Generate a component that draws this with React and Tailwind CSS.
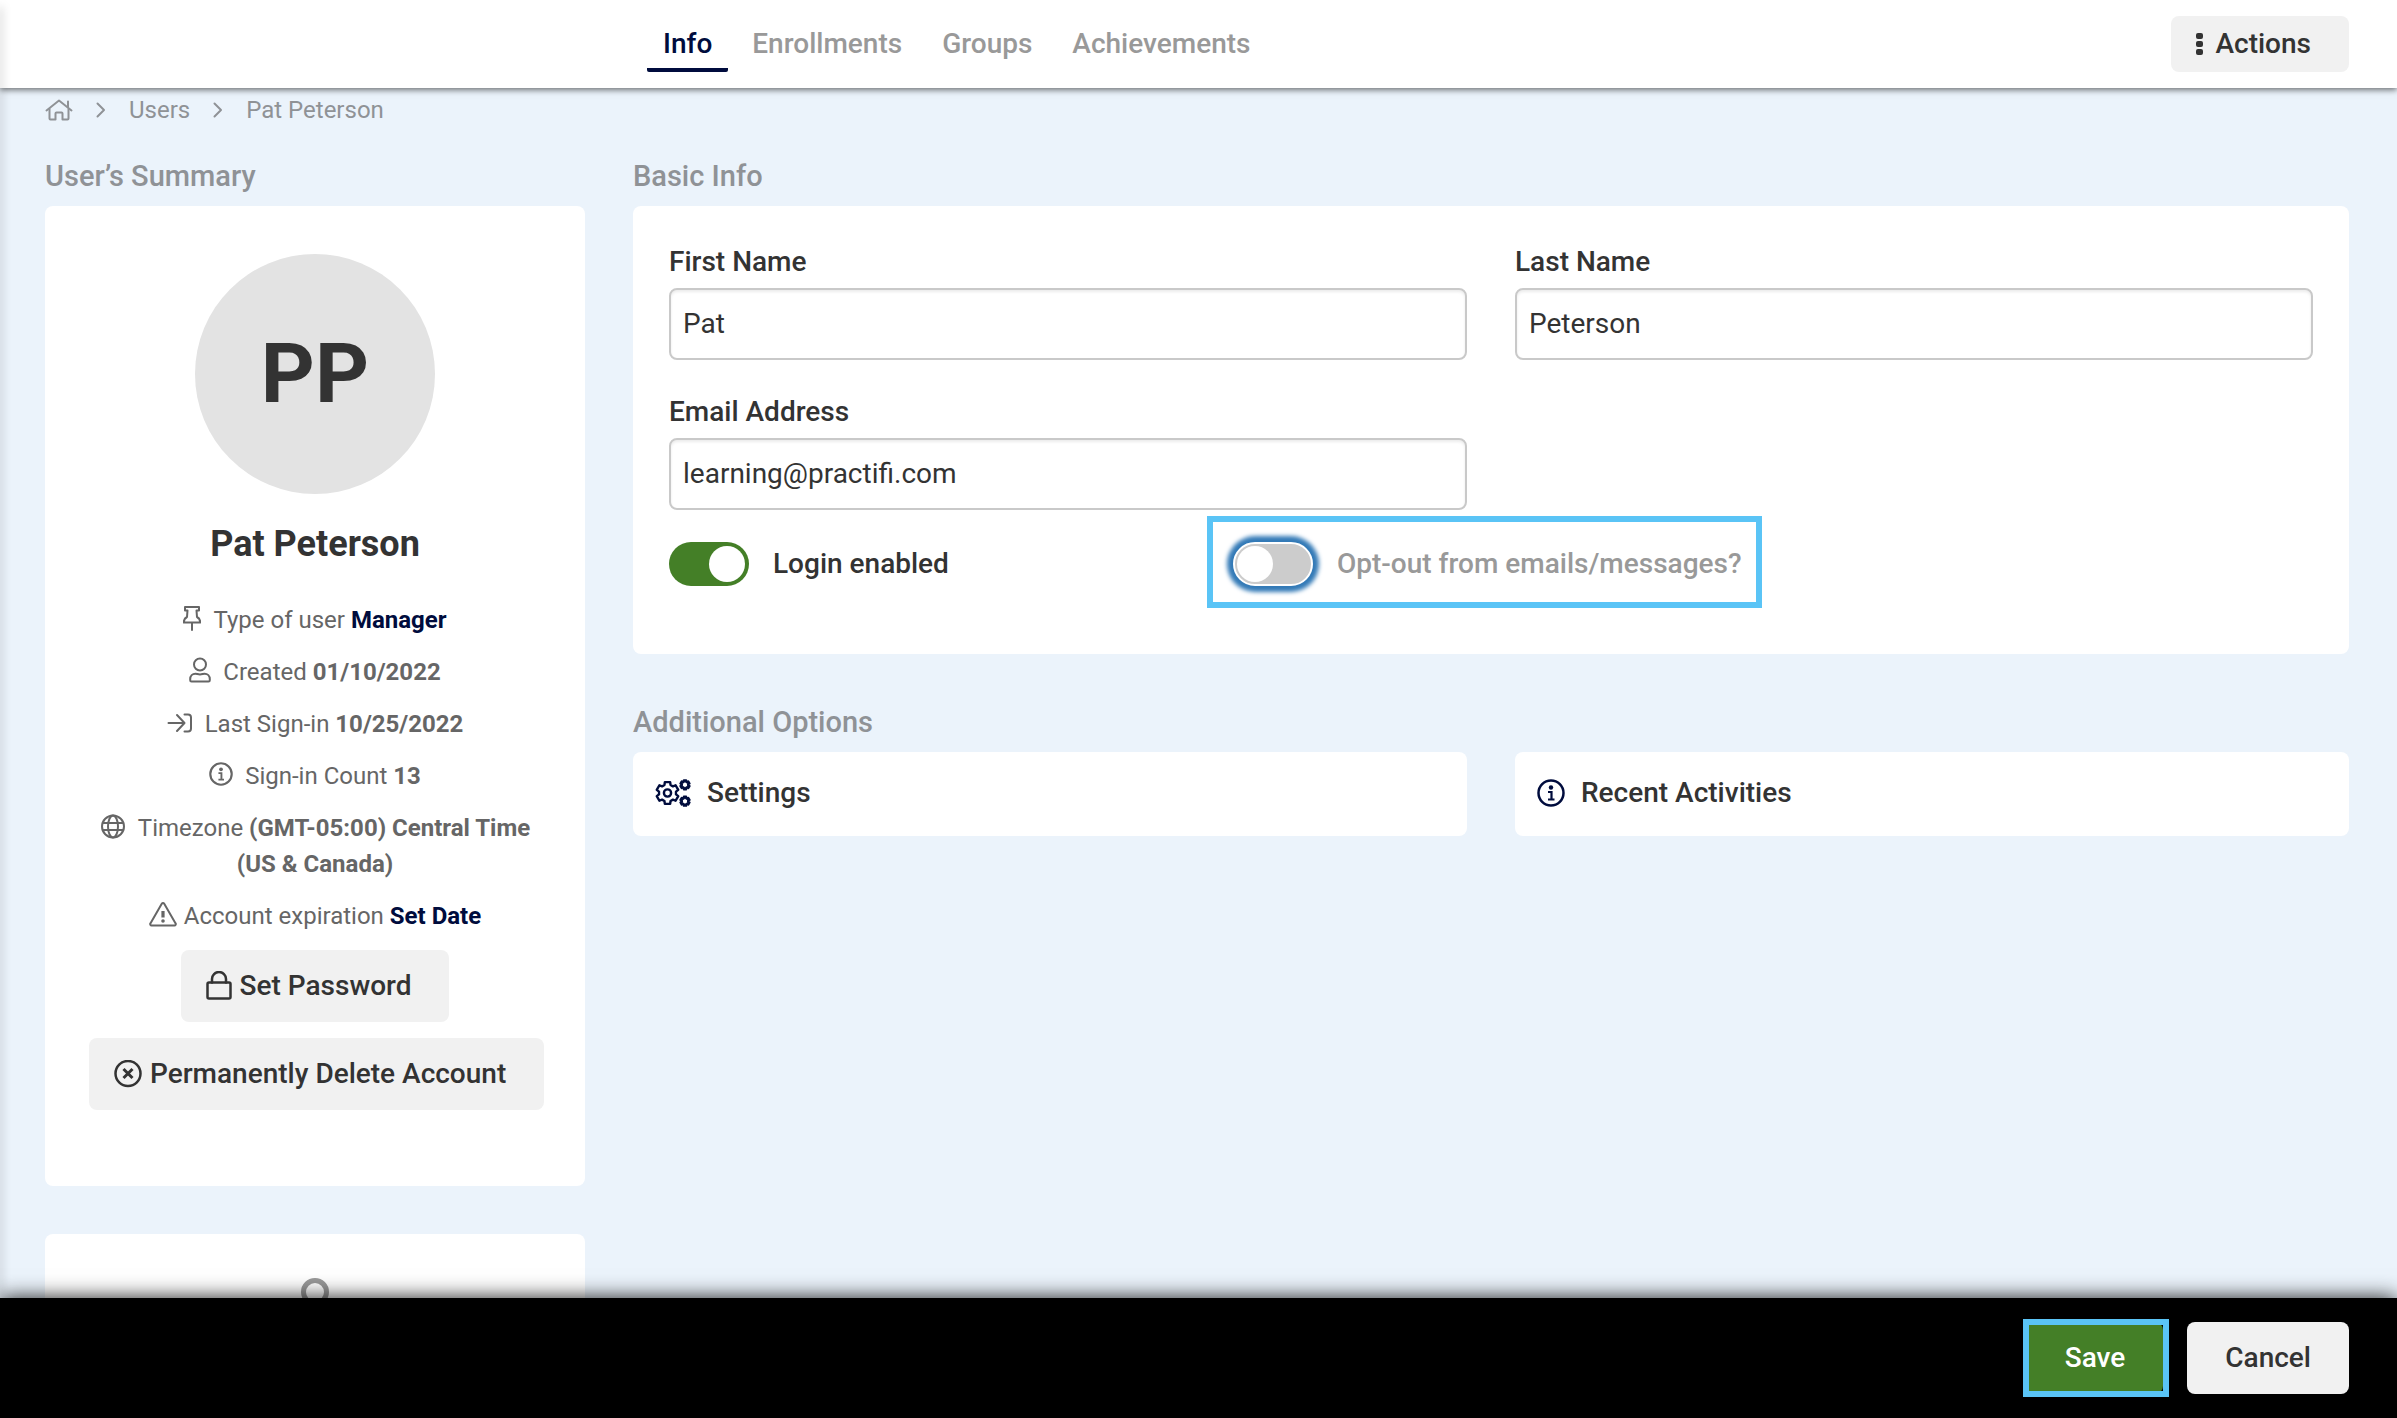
import React, { useState } from 'react';

const TABS = ['Info', 'Enrollments', 'Groups', 'Achievements'];

// Shared wrapper for the outlined icons
const Icon = ({ className, viewBox, strokeWidth = 2, children }) => (
  <svg
    className={className}
    viewBox={viewBox}
    fill="none"
    stroke="currentColor"
    strokeWidth={strokeWidth}
    strokeLinecap="round"
    strokeLinejoin="round"
    aria-hidden="true"
  >
    {children}
  </svg>
);

const HomeIcon = () => (
  <Icon className="h-[22px] w-7" viewBox="0 0 28 22">
    <path d="M1.500 11.500 14 1.500l12.500 10M23 8V2.500" />
    <path d="M4.500 10v9.500a1 1 0 0 0 1 1h5v-6a1 1 0 0 1 1-1h5a1 1 0 0 1 1 1v6h5a1 1 0 0 0 1-1V10" />
  </Icon>
);

const ChevronIcon = () => (
  <Icon className="h-4 w-[10px]" viewBox="0 0 10 16">
    <path d="M1.500 1.500 8 8l-6.500 6.500" />
  </Icon>
);

const PinIcon = () => (
  <Icon className="inline h-[26px] w-[18px]" viewBox="0 0 18 26">
    <path d="M2 2h14v3.500h-2.500l.5 6.500c2 1 3.200 2.800 3.200 5.500H.800C.800 14.800 2 13 4 12l.5-6.500H2zM9 17.500V25" />
  </Icon>
);

const UserIcon = () => (
  <Icon className="inline h-[26px] w-[22px]" viewBox="0 0 22 26">
    <circle cx="11" cy="7.500" r="6" />
    <path d="M2.500 24.500a1.300 1.300 0 0 1-1.300-1.300V22c0-3 2.300-5.300 5.200-5.300 1.600 0 2.500.8 4.600.8s3-.8 4.600-.8c2.900 0 5.200 2.300 5.200 5.300v1.200a1.300 1.300 0 0 1-1.300 1.300z" />
  </Icon>
);

const SignInIcon = () => (
  <Icon className="inline h-[26px] w-[26px]" viewBox="0 0 26 26">
    <path d="M1.500 14H17M10 6l7.500 8-7.500 8" />
    <path d="M17.500 5.500H21a3 3 0 0 1 3 3v11a3 3 0 0 1-3 3h-3.500" />
  </Icon>
);

const InfoIcon = ({ className }) => (
  <Icon className={className} viewBox="0 0 28 28" strokeWidth={2.5}>
    <circle cx="14" cy="14" r="12.500" />
    <circle cx="14" cy="8.500" r="2.200" fill="currentColor" stroke="none" />
    <path d="M11 13h3.500v7.500M11 20.500h6.500" strokeWidth="2.200" strokeLinecap="butt" strokeLinejoin="miter" />
  </Icon>
);

const GlobeIcon = () => (
  <Icon className="inline h-[26px] w-[26px]" viewBox="0 0 26 26">
    <circle cx="13" cy="13.500" r="11" />
    <ellipse cx="13" cy="13.500" rx="5" ry="11" />
    <path d="M2.800 10h20.400M2.800 17h20.400" />
  </Icon>
);

const WarningIcon = () => (
  <Icon className="inline h-[26px] w-7" viewBox="0 0 28 26">
    <path d="M12.900 2.600 1.400 22.400a1.300 1.300 0 0 0 1.100 2h23a1.300 1.300 0 0 0 1.100-2L15.100 2.600a1.300 1.300 0 0 0-2.200 0z" />
    <path d="M14 10v6.500" strokeWidth="3.200" strokeLinecap="butt" />
    <circle cx="14" cy="20" r="1.800" fill="currentColor" stroke="none" />
  </Icon>
);

const LockIcon = () => (
  <Icon className="h-[30px] w-[26px]" viewBox="0 0 26 30" strokeWidth={2.5}>
    <rect x="1.500" y="11.500" width="23" height="16" rx="1.500" />
    <path d="M6 11.500V8a7 7 0 0 1 14 0v3.500" />
  </Icon>
);

const CloseCircleIcon = () => (
  <Icon className="h-7 w-7" viewBox="0 0 28 28" strokeWidth={2.5}>
    <circle cx="14" cy="13.500" r="12.500" />
    <path d="m9.500 9 9 9M18.500 9l-9 9" strokeWidth="3" strokeLinecap="butt" />
  </Icon>
);

const DotsIcon = () => (
  <svg className="h-[22px] w-[7px]" viewBox="0 0 7 22" fill="currentColor" aria-hidden="true">
    <rect y="0" width="7" height="6" rx="2" />
    <rect y="8" width="7" height="6" rx="2" />
    <rect y="16" width="7" height="6" rx="2" />
  </svg>
);

// Outline of a six-toothed gear
const gearPath = (cx, cy, outer, inner) => {
  const points = [];
  for (let i = 0; i < 6; i++) {
    const angle = (i * Math.PI) / 3 - Math.PI / 2;
    [[-0.36, inner], [-0.24, outer], [0.24, outer], [0.36, inner]].forEach(([delta, r]) => {
      points.push(`${(cx + r * Math.cos(angle + delta)).toFixed(2)} ${(cy + r * Math.sin(angle + delta)).toFixed(2)}`);
    });
  }
  return `M${points.join('L')}z`;
};

const GearsIcon = () => (
  <Icon className="h-7 w-9 text-[#000c3d]" viewBox="0 0 36 28" strokeWidth={2.4}>
    <path d={gearPath(12.5, 14, 11.2, 8.6)} />
    <circle cx="12.500" cy="14" r="3.600" />
    <path d={gearPath(30, 5.8, 4.6, 3.2)} />
    <path d={gearPath(30, 22.2, 4.6, 3.2)} />
  </Icon>
);

const GreyButton = ({ className = 'h-[72px] gap-2', children }) => (
  <button
    type="button"
    className={`flex shrink-0 items-center rounded-lg bg-[#f1f1f1] pr-[38px] pl-[25px] text-[28px] font-medium whitespace-nowrap text-[#333] ${className}`}
  >
    {children}
  </button>
);

const SectionTitle = ({ children }) => (
  <h2 className="mb-3 text-[29px] leading-9 font-medium text-[#8f9296]">{children}</h2>
);

const SummaryRow = ({ icon, label, tight, children }) => (
  <li>
    <span className={tight ? 'mr-[7px] inline-block align-[-3px]' : 'mr-3 inline-block align-[-3px]'}>
      <span className="flex">{icon}</span>
    </span>
    {label} {children}
  </li>
);

const Field = ({ id, label, type = 'text', defaultValue }) => (
  <div>
    <label htmlFor={id} className="mb-2 block pt-[2px] text-[28px] leading-9 font-medium">
      {label}
    </label>
    <input
      id={id}
      type={type}
      defaultValue={defaultValue}
      className="h-[72px] w-full rounded-lg border-2 border-[#c9c9c9] bg-white px-3 pb-[2px] text-[28px] shadow-[inset_0_2px_3px_rgba(0,0,0,0.08)] outline-none"
    />
  </div>
);

const Toggle = ({ id, label, checked, onChange, highlighted }) => (
  <div className={highlighted ? 'relative flex w-max items-center gap-6 text-[#999]' : 'flex w-max items-center gap-6'}>
    <input
      id={id}
      type="checkbox"
      role="switch"
      checked={checked}
      onChange={(e) => onChange(e.target.checked)}
      className={`h-11 w-20 appearance-none rounded-full before:block before:h-9 before:w-9 before:rounded-full before:bg-white checked:bg-[#447f27] checked:before:translate-x-9 ${
        highlighted
          ? 'border-2 border-white bg-[#ccc] p-[2px] shadow-[0_0_4px_6px_#337ab7]'
          : 'bg-[#ccc] p-1'
      }`}
    />
    <label htmlFor={id} className="text-[28px] leading-9 font-medium">
      {label}
    </label>
    {highlighted && (
      <span className="pointer-events-none absolute -top-[26px] -right-5 -bottom-[22px] -left-[26px] border-[6px] border-[#5ac4f6]" />
    )}
  </div>
);

const App = () => {
  const [loginEnabled, setLoginEnabled] = useState(true);
  const [optOut, setOptOut] = useState(false);

  return (
    <div className="relative flex h-screen flex-col overflow-hidden bg-[#ebf3fb] font-[Roboto,sans-serif] text-[#333]">
      <header className="relative z-10 flex h-[88px] shrink-0 items-center justify-between bg-white pr-12 pl-[647px] shadow-[0_2px_6px_rgba(0,0,0,0.55)]">
        <nav className="flex gap-2">
          {TABS.map((tab, i) => (
            <a
              key={tab}
              href="#"
              className={`h-14 rounded-xs border-b-4 px-4 text-[28px] leading-[56px] font-medium ${
                i === 0 ? 'border-[#000c3d] text-[#000c3d]' : 'border-transparent text-[#999]'
              }`}
            >
              {tab}
            </a>
          ))}
        </nav>
        <GreyButton className="h-14 gap-3">
          <DotsIcon />
          Actions
        </GreyButton>
      </header>

      <main className="min-h-0 flex-1 overflow-y-auto pr-12 pl-[45px] [scrollbar-width:none]">
        <nav className="flex items-center gap-[23px] pt-1 text-2xl leading-9 text-[#8f9296]" aria-label="Breadcrumb">
          <a href="#" aria-label="Home">
            <HomeIcon />
          </a>
          <ChevronIcon />
          <a href="#">Users</a>
          <ChevronIcon />
          <span>Pat Peterson</span>
        </nav>

        <div className="flex items-start gap-12 pt-[30px]">
          <aside className="w-[540px] shrink-0">
            <SectionTitle>User’s Summary</SectionTitle>
            <section className="flex flex-col rounded-lg bg-white px-11 pt-12 pb-[76px] [align-items:safe_center]">
              <div className="flex h-60 w-60 items-center justify-center rounded-full bg-[#e3e3e3] text-[84px] font-bold">
                PP
              </div>
              <h1 className="mt-6 text-4xl leading-[52px] font-bold">Pat Peterson</h1>
              <ul className="mt-8 flex flex-col gap-4 text-center text-2xl leading-9 text-[#666]">
                <SummaryRow icon={<PinIcon />} label="Type of user">
                  <b className="text-[#000c3d]">Manager</b>
                </SummaryRow>
                <SummaryRow icon={<UserIcon />} label="Created">
                  <b>01/10/2022</b>
                </SummaryRow>
                <SummaryRow icon={<SignInIcon />} label="Last Sign-in">
                  <b>10/25/2022</b>
                </SummaryRow>
                <SummaryRow icon={<InfoIcon className="h-[26px] w-6" />} label="Sign-in Count">
                  <b>13</b>
                </SummaryRow>
                <SummaryRow icon={<GlobeIcon />} label="Timezone">
                  <b>(GMT-05:00) Central Time (US &amp; Canada)</b>
                </SummaryRow>
                <SummaryRow icon={<WarningIcon />} label="Account expiration" tight>
                  <a href="#" className="font-bold text-[#000c3d]">Set Date</a>
                </SummaryRow>
              </ul>
              <GreyButton className="mt-4 h-[72px] gap-2">
                <LockIcon />
                Set Password
              </GreyButton>
              <GreyButton className="mt-4 h-[72px] gap-2">
                <CloseCircleIcon />
                Permanently Delete Account
              </GreyButton>
            </section>

            <section className="mt-12 flex justify-center rounded-lg bg-white pt-11 pb-12 text-[#999]">
              <Icon className="h-14 w-12" viewBox="0 0 48 56" strokeWidth={5}>
                <circle cx="24" cy="14" r="11.500" />
                <path d="M4 53c0-12 8-20 20-20s20 8 20 20z" />
              </Icon>
            </section>
          </aside>

          <div className="min-w-0 flex-1">
            <SectionTitle>Basic Info</SectionTitle>
            <section className="rounded-lg bg-white px-9 pt-9 pb-[68px]">
              <div className="grid grid-cols-2 gap-x-12 gap-y-8">
                <Field id="first-name" label="First Name" defaultValue="Pat" />
                <Field id="last-name" label="Last Name" defaultValue="Peterson" />
                <Field id="email" label="Email Address" type="email" defaultValue="learning@practifi.com" />
              </div>
              <div className="mt-8 grid grid-cols-3 gap-12">
                <Toggle id="login-enabled" label="Login enabled" checked={loginEnabled} onChange={setLoginEnabled} />
                <Toggle
                  id="opt-out"
                  label="Opt-out from emails/messages?"
                  checked={optOut}
                  onChange={setOptOut}
                  highlighted
                />
              </div>
            </section>

            <div className="mt-[50px]">
              <SectionTitle>Additional Options</SectionTitle>
              <div className="grid grid-cols-2 gap-12">
                <button type="button" className="flex h-[84px] items-center gap-4 rounded-lg bg-white px-[22px] pb-[2px] text-[28px] font-medium">
                  <GearsIcon />
                  Settings
                </button>
                <button type="button" className="flex h-[84px] items-center gap-4 rounded-lg bg-white px-[22px] pb-[2px] text-[28px] font-medium">
                  <InfoIcon className="h-7 w-7 text-[#000c3d]" />
                  Recent Activities
                </button>
              </div>
            </div>
          </div>
        </div>
      </main>

      <footer className="relative z-10 flex shrink-0 justify-end gap-6 bg-black py-6 pr-12 shadow-[0_0_20px_rgba(0,0,0,0.9)]">
        <div className="relative">
          <button type="button" className="h-[72px] rounded-lg bg-[#447f27] px-[38px] text-[28px] font-medium text-white">
            Save
          </button>
          <span className="pointer-events-none absolute -inset-y-[3px] -right-[6px] -left-1 border-[6px] border-[#5ac4f6]" />
        </div>
        <button type="button" className="h-[72px] rounded-lg bg-[#f1f1f1] px-[38px] text-[28px] font-medium">
          Cancel
        </button>
      </footer>

      <div className="pointer-events-none absolute top-2 bottom-[120px] left-0 w-0 z-20 shadow-[0_0_10px_1px_rgba(0,0,0,0.4)]" />
    </div>
  );
};

export default App;
